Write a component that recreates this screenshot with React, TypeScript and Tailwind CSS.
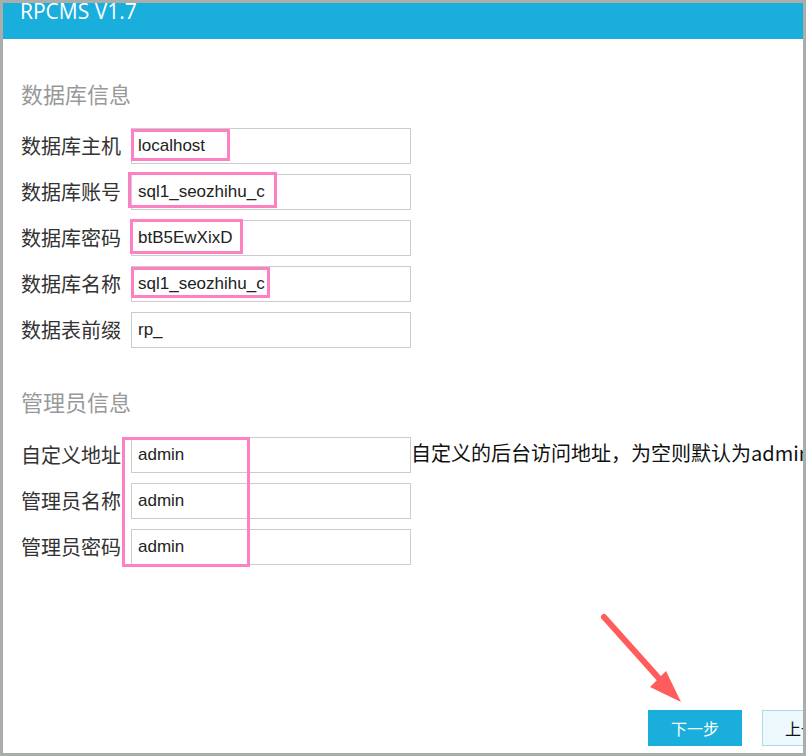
import React from "react";

const cjk = { fontFamily: '"Noto Sans CJK SC", "Noto Sans", sans-serif' };
const latin = { fontFamily: '"Liberation Sans", Arial, "Noto Sans CJK SC", sans-serif' };

function Row({ label, value, hint }: { label: string; value: string; hint?: string }) {
  return (
    <div className="flex items-center h-[36px]">
      <div className="w-[110px] shrink-0 text-[20px] text-[#333] leading-[36px] whitespace-nowrap" style={cjk}>
        {label}
      </div>
      <div
        className="w-[280px] h-[36px] shrink-0 border border-[#cccccc] bg-white pl-[6px] flex items-center text-[17px] text-[#222]"
        style={latin}
      >
        {value}
      </div>
      {hint && (
        <div className="self-start mt-[1px] text-[20px] leading-[30px] text-[#111] whitespace-nowrap" style={cjk}>
          {hint}
        </div>
      )}
    </div>
  );
}

function PinkBox({ l, t, w, h }: { l: number; t: number; w: number; h: number }) {
  return (
    <div
      className="absolute border-[3px] border-[#fd80c2] pointer-events-none"
      style={{ left: l, top: t, width: w, height: h }}
    />
  );
}

export default function App() {
  return (
    <div className="relative w-[806px] h-[756px] bg-[#a9aeab] p-[3px] overflow-hidden">
      <div className="w-[800px] h-[750px] bg-white overflow-hidden flex flex-col">
        <div className="h-[36px] shrink-0 bg-[#19aedb] pl-[17px] overflow-hidden">
          <div
            className="text-white text-[21px] leading-[21px] -mt-[2px] whitespace-nowrap"
            style={{ fontFamily: '"Open Sans", "Noto Sans", sans-serif' }}
          >
            RPCMS V1.7
          </div>
        </div>
        <div className="pl-[18px] w-[900px]">
          <div className="mt-[38px] h-[32px] flex items-center text-[22px] text-[#999]" style={cjk}>
            数据库信息
          </div>
          <div className="mt-[19px] flex flex-col gap-[10px]">
            <Row label="数据库主机" value="localhost" />
            <Row label="数据库账号" value="sql1_seozhihu_c" />
            <Row label="数据库密码" value="btB5EwXixD" />
            <Row label="数据库名称" value="sql1_seozhihu_c" />
            <Row label="数据表前缀" value="rp_" />
          </div>
          <div className="mt-[37px] h-[32px] flex items-center text-[22px] text-[#999]" style={cjk}>
            管理员信息
          </div>
          <div className="mt-[20px] flex flex-col gap-[10px]">
            <Row label="自定义地址" value="admin" hint="自定义的后台访问地址，为空则默认为admin" />
            <Row label="管理员名称" value="admin" />
            <Row label="管理员密码" value="admin" />
          </div>
          <div className="mt-[145px] flex gap-[20px] pl-[627px]">
            <button
              className="w-[94px] h-[36px] bg-[#19aedb] text-white text-[16px] flex items-center justify-center"
              style={cjk}
            >
              下一步
            </button>
            <button
              className="w-[94px] h-[36px] bg-[#edf9fd] border border-[#a9dbe8] text-[#111] text-[16px] flex items-center justify-center"
              style={cjk}
            >
              上一步
            </button>
          </div>
        </div>
      </div>

      <PinkBox l={131} t={129} w={99} h={32} />
      <PinkBox l={128} t={172} w={149} h={36} />
      <PinkBox l={130} t={219} w={113} h={35} />
      <PinkBox l={131} t={267} w={139} h={31} />
      <PinkBox l={122} t={437} w={128} h={130} />

      <svg className="absolute left-0 top-0 pointer-events-none" width="806" height="756">
        <line x1="604" y1="617" x2="664" y2="684" stroke="#ff5c5c" strokeWidth="6" strokeLinecap="round" />
        <polygon points="681,702 650,687 666,671" fill="#ff5c5c" />
      </svg>
    </div>
  );
}
